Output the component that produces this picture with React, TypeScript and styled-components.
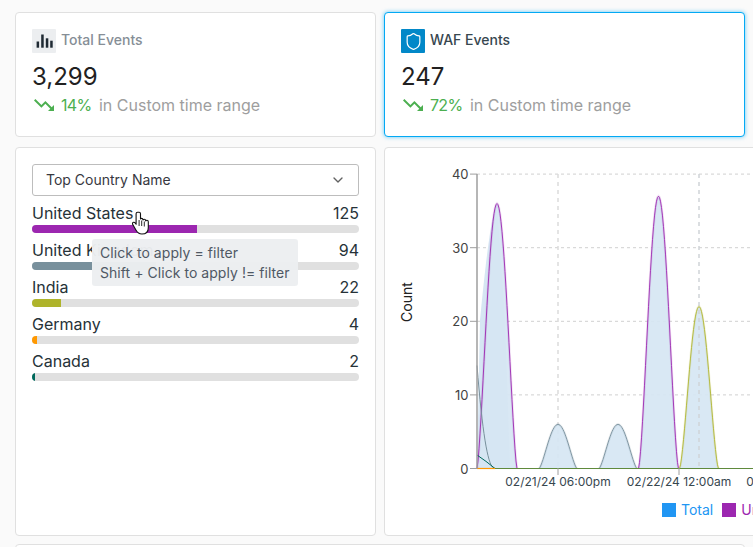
import React from "react";
import styled, { createGlobalStyle } from "styled-components";
import { ChevronDown, Shield } from "lucide-react";

const Global = createGlobalStyle`
  html, body { margin: 0; padding: 0; height: 547px; overflow: hidden; background: #fafafa; }
  body { font-family: Inter, "Noto Sans", sans-serif; color: #212121; }
`;

const Page = styled.div`
  width: 753px;
  height: 547px;
  overflow: hidden;
  box-sizing: border-box;
  padding: 12px 0 0 15px;
  display: grid;
  grid-template-columns: 361px 361px;
  grid-template-rows: 125px 389px 60px;
  gap: 10px 8px;
`;

const Card = styled.section<{ $active?: boolean }>`
  box-sizing: border-box;
  background: #fff;
  border: 1px solid ${(p) => (p.$active ? "#03a9f4" : "#e0e0e0")};
  border-radius: 4px;
  padding: 16px;
  box-shadow: ${(p) => (p.$active ? "0 0 4px rgba(3,169,244,.6)" : "none")};
`;

const StatHeader = styled.div`
  display: flex;
  align-items: center;
  gap: 5px;
  height: 24px;
`;

const IconTile = styled.div<{ $bg: string }>`
  width: 24px;
  height: 24px;
  display: flex;
  align-items: center;
  justify-content: center;
  background: ${(p) => p.$bg};
  border-radius: 1px;
`;

const StatTitle = styled.span<{ $active?: boolean }>`
  font-size: 14px;
  font-weight: 500;
  padding-bottom: 3px;
  color: ${(p) => (p.$active ? "#37474f" : "#868e96")};
`;

const StatValue = styled.div`
  margin-top: 8px;
  font-size: 24px;
  line-height: 32px;
  color: #212121;
`;

const Trend = styled.div`
  display: flex;
  align-items: center;
  height: 24px;
  font-size: 16px;
`;

const TrendPct = styled.span`
  color: #4caf50;
  letter-spacing: -0.7px;
  margin: 0 7.5px 0 5px;
`;

const TrendNote = styled.span`
  color: #9e9e9e;
`;

const ListCard = styled(Card)`
  position: relative;
`;

const Select = styled.div`
  box-sizing: border-box;
  height: 32px;
  display: flex;
  align-items: center;
  justify-content: space-between;
  padding: 0 12px 1px 13px;
  border: 1px solid #bdbdbd;
  border-radius: 3px;
  font-size: 14px;
  color: #37383f;
`;

const Row = styled.div`
  margin-top: 5px;
`;

const RowText = styled.div`
  display: flex;
  justify-content: space-between;
  font-size: 16px;
  line-height: 24px;
  color: #263238;
`;

const Track = styled.div`
  height: 8px;
  border-radius: 4px;
  background: #e0e0e0;
  overflow: hidden;
`;

const Fill = styled.div<{ $color: string }>`
  height: 100%;
  background: ${(p) => p.$color};
`;

const Tip = styled.div`
  position: absolute;
  left: 76px;
  top: 91px;
  box-sizing: border-box;
  width: 206px;
  height: 47px;
  padding: 4px 8px;
  border-radius: 3px;
  background: rgba(236, 238, 241, 0.97);
  font-size: 14px;
  letter-spacing: 0.05px;
  line-height: 20px;
  color: #4f5864;
  white-space: nowrap;
`;

const Cursor = styled.svg`
  position: absolute;
  left: 116px;
  top: 63px;
`;

const ChartCard = styled(Card)`
  width: 560px;
  padding: 0;
`;

const ChartSvg = styled.svg`
  display: block;
`;

const Legend = styled.div`
  display: flex;
  align-items: center;
  gap: 9px;
  margin-top: 15px;
  padding-left: 277px;
  white-space: nowrap;
`;

const LegendItem = styled.div<{ $color: string }>`
  display: flex;
  align-items: center;
  gap: 4px;
  font-size: 14px;
  line-height: 14px;
  color: ${(p) => p.$color};
  &::before {
    content: "";
    width: 14px;
    height: 14px;
    margin-right: 1px;
    background: ${(p) => p.$color};
  }
`;

const FooterCard = styled(Card)`
  grid-column: 1 / 3;
  width: 730px;
  margin-top: -2px;
`;

const Y0 = 468.5;
const UNIT = 7.36;

function bump(c: number, w: number, h: number, p: number) {
  const pts: string[] = [];
  for (let x = c - w; x <= c + w + 0.01; x += 1) {
    const v = h * Math.pow(Math.max(0, Math.cos((Math.PI * (x - c)) / (2 * w))), p);
    pts.push(`${x.toFixed(1)},${(Y0 - v * UNIT).toFixed(1)}`);
  }
  return "M" + pts.join(" L");
}

function decay(w: number, h: number) {
  const pts: string[] = [];
  for (let d = 0; d <= w; d += 1) {
    const v = h * Math.pow(1 - d / w, 2.2);
    pts.push(`${477 + d},${(Y0 - v * UNIT).toFixed(1)}`);
  }
  return "M" + pts.join(" L");
}

const BLUE = "#d6e6f3";
const PURPLE = "#9c27b0";
const GRAY = "#78909c";
const OLIVE = "#afb42b";

const peaks = [
  { c: 558, w: 19, h: 6, color: GRAY, p: 1.4 },
  { c: 618, w: 19, h: 6, color: GRAY, p: 1.4 },
  { c: 658.5, w: 20, h: 37, color: PURPLE, p: 1.5 },
  { c: 699, w: 19.5, h: 22, color: OLIVE, p: 1.5 },
  { c: 497, w: 20, h: 36, color: PURPLE, p: 1.4 },
];

const rows = [
  { name: "United States", n: 125, color: "#9c27b0" },
  { name: "United Kingdom", n: 94, color: "#78909c" },
  { name: "India", n: 22, color: "#afb42b" },
  { name: "Germany", n: 4, color: "#ff9800" },
  { name: "Canada", n: 2, color: "#00695c" },
];

const TrendIcon = () => (
  <svg width="24" height="24" viewBox="0 0 24 24" fill="#4caf50">
    <path d="M16 18l2.29-2.29-4.88-4.88-4 4L2 7.41 3.41 6l6 6 4-4 6.3 6.29L22 12v6z" />
  </svg>
);

const BarsIcon = () => (
  <svg width="24" height="24" viewBox="0 0 24 24" fill="#1f2a33">
    <rect x="4.6" y="12.5" width="2.5" height="6.2" />
    <rect x="9.2" y="5.5" width="2.5" height="13.200" />
    <rect x="13.800" y="9.3" width="2.5" height="9.4" />
    <rect x="18.2" y="11.7" width="2.5" height="7" />
  </svg>
);

const yTicks = [40, 30, 20, 10, 0];

function Chart() {
  return (
    <ChartSvg width="558" height="340" viewBox="385 148 558 340">
      {yTicks.map((t) => (
        <line key={t} x1="477" x2="943" y1={Y0 - t * UNIT} y2={Y0 - t * UNIT} stroke="#d0d0d0" strokeWidth="1" strokeDasharray="3 3" />
      ))}
      <line x1="558" x2="558" y1="174" y2="468" stroke="#dcdcdc" strokeWidth="1.5" strokeDasharray="4 4" />

      {peaks.map((k) => (
        <path key={k.c} d={`${bump(k.c, k.w, k.h, k.p)} Z`} fill={BLUE} fillOpacity="0.92" />
      ))}
      <path d="M477 468.500 L480 320 Q490 215 497 203 L505 320 L510 468.500 Z" fill={BLUE} />
      <line x1="699" x2="699" y1="174" y2="468" stroke="#cfd3d8" strokeWidth="1.5" strokeDasharray="4 4" />
      {peaks.map((k) => (
        <g key={k.c}>
          <path d={bump(k.c, k.w, k.h, k.p)} fill="none" stroke={k.color} strokeOpacity="0.14" strokeWidth="2.500" />
          <path d={bump(k.c, k.w, k.h, k.p)} fill="none" stroke={k.color} strokeWidth="0.9" />
        </g>
      ))}
      <path d={decay(18, 14)} fill="none" stroke={GRAY} strokeWidth="1" />
      <path d="M477 455 Q486 461 495 468.5" fill="none" stroke="#00695c" strokeWidth="1" />
      <line x1="477" x2="495" y1="468.5" y2="468.5" stroke="#ff9800" strokeWidth="1.2" />
      <line x1="495" x2="943" y1="468.5" y2="468.5" stroke="#5f8a3c" strokeWidth="1.2" />

      <line x1="477" x2="477" y1="174" y2="468.5" stroke="#9e9e9e" strokeWidth="1.5" />
      {yTicks.map((t) => (
        <g key={t}>
          <line x1="470" x2="477" y1={Y0 - t * UNIT} y2={Y0 - t * UNIT} stroke="#9e9e9e" />
          <text x="468.500" y={Y0 - t * UNIT + 5} textAnchor="end" fontSize="13" fontFamily="Inter, sans-serif" fill="#424242">{t}</text>
        </g>
      ))}
      <line x1="558" x2="558" y1="468" y2="475" stroke="#9e9e9e" />
      <line x1="679" x2="679" y1="468" y2="475" stroke="#9e9e9e" />
      <text x="558" y="486" textAnchor="middle" fontSize="12" fontFamily="Inter, sans-serif" fill="#37474f">02/21/24 06:00pm</text>
      <text x="679" y="486" textAnchor="middle" fontSize="12" fontFamily="Inter, sans-serif" fill="#37474f">02/22/24 12:00am</text>
      <text x="800" y="486" textAnchor="middle" fontSize="12" fontFamily="Inter, sans-serif" fill="#37474f">02/22/24 06:00am</text>
      <text transform="translate(412 302) rotate(-90)" textAnchor="middle" fontSize="14" fontFamily="Inter, sans-serif" fill="#212121">Count</text>
    </ChartSvg>
  );
}

export default function App() {
  return (
    <>
      <Global />
      <Page>
        <Card>
          <StatHeader>
            <IconTile $bg="#eceef0"><BarsIcon /></IconTile>
            <StatTitle>Total Events</StatTitle>
          </StatHeader>
          <StatValue>3,299</StatValue>
          <Trend>
            <TrendIcon />
            <TrendPct>14%</TrendPct>
            <TrendNote>in Custom time range</TrendNote>
          </Trend>
        </Card>
        <Card $active>
          <StatHeader>
            <IconTile $bg="#0288c8"><Shield size={19} color="#fff" strokeWidth={1.5} /></IconTile>
            <StatTitle $active>WAF Events</StatTitle>
          </StatHeader>
          <StatValue>247</StatValue>
          <Trend>
            <TrendIcon />
            <TrendPct>72%</TrendPct>
            <TrendNote>in Custom time range</TrendNote>
          </Trend>
        </Card>

        <ListCard>
          <Select>
            <span>Top Country Name</span>
            <ChevronDown size={16} color="#616161" />
          </Select>
          {rows.map((r) => (
            <Row key={r.name}>
              <RowText>
                <span>{r.name}</span>
                <span>{r.n}</span>
              </RowText>
              <Track>
                <Fill $color={r.color} style={{ width: `${(r.n / 247) * 100}%` }} />
              </Track>
            </Row>
          ))}
          <Tip>
            Click to apply = filter
            <br />
            Shift + Click to apply != filter
          </Tip>
          <Cursor width="18" height="25" viewBox="0 0 18 25">
            <path
              d="M5.6 1.2c-.9 0-1.5.7-1.5 1.6v10.4l-1-1.2c-.7-.8-1.8-.9-2.3-.3-.5.5-.4 1.3.1 2.1l3 5.2c1.2 2.2 2.9 4 6 4 3.600 0 6.400-2.200 6.400-6.300v-6c0-.9-.6-1.500-1.400-1.500-.5 0-.9.2-1.200.6 0-1-.7-1.600-1.500-1.600-.5 0-1 .3-1.200.7-.1-.9-.8-1.500-1.500-1.500-.4 0-.7.1-1 .4V2.800c0-.9-.6-1.600-1.400-1.600z"
              fill="#fff"
              stroke="#111"
              strokeWidth="1.100"
              strokeLinejoin="round"
            />
            <path d="M7.100 9v6M9.700 9.500v5.500M12.300 10.500v5" stroke="#111" strokeWidth="0.9" fill="none" />
          </Cursor>
        </ListCard>

        <ChartCard>
          <Chart />
          <Legend>
            <LegendItem $color="#2196f3">Total</LegendItem>
            <LegendItem $color="#9c27b0">United States</LegendItem>
          </Legend>
        </ChartCard>

        <FooterCard />
      </Page>
    </>
  );
}
